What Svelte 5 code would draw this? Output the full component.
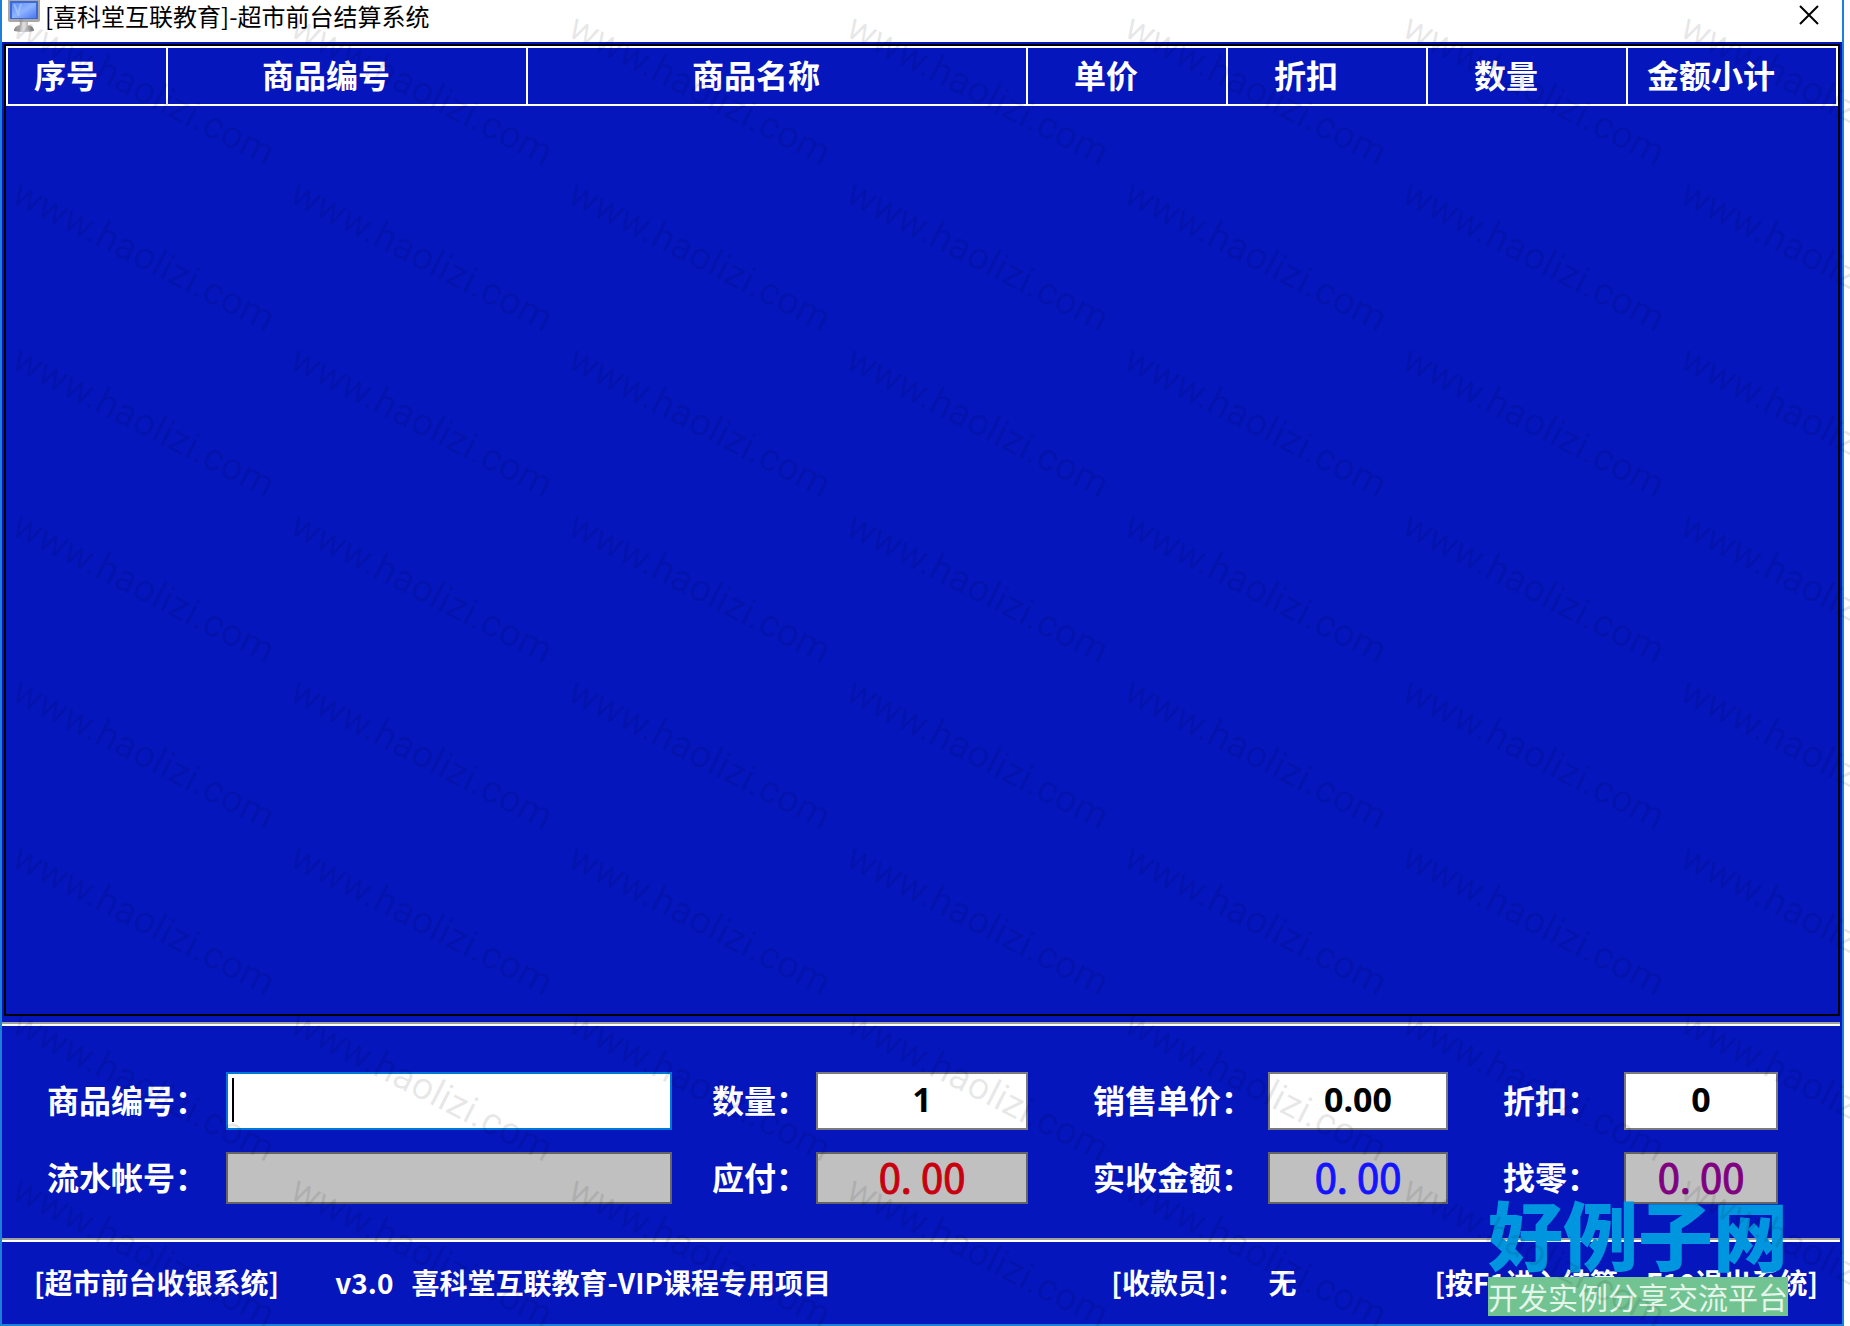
<script>
	// Sales table columns, width is a share of the whole table
	const columns = [
		{ label: "序号", width: 162 },
		{ label: "商品编号", width: 360 },
		{ label: "商品名称", width: 500 },
		{ label: "单价", width: 200 },
		{ label: "折扣", width: 200 },
		{ label: "数量", width: 200 },
		{ label: "金额小计", width: 210 },
	];

	const totalWidth = columns.reduce((sum, col) => sum + col.width, 0);

	// Watermark tiles, 7 per row
	const tiles = Array(56).fill("www.haolizi.com");

	let productId = "";
	let quantity = "1";
	let unitPrice = "0.00";
	let discount = "0";
</script>

<div class="window">
	<header class="title-bar">
		<svg class="app-icon" width="32" height="32" viewBox="0 0 32 32">
			<defs>
				<linearGradient id="screen" x1="0" y1="0" x2="1" y2="1">
					<stop offset="0" stop-color="#5d8df0" />
					<stop offset="0.5" stop-color="#8fb4ff" />
					<stop offset="1" stop-color="#4a78f0" />
				</linearGradient>
				<linearGradient id="metal" x1="0" y1="0" x2="1" y2="0">
					<stop offset="0" stop-color="#7e7e7e" />
					<stop offset="0.5" stop-color="#e2e2e2" />
					<stop offset="1" stop-color="#757575" />
				</linearGradient>
			</defs>
			<rect x="0" y="-2" width="32" height="24" rx="2" fill="#aaa8a2" />
			<rect x="2" y="1" width="28" height="18" fill="#3c68dc" />
			<rect x="4" y="3" width="24" height="15" fill="url(#screen)" />
			<path d="M6 4l5 12M13 4l-3 10" stroke="#b4cdff" stroke-width="2" fill="none" opacity="0.6" />
			<path d="M12 22h8v3q6 1 6 6q-10 2-20 0q0-5 6-6z" fill="url(#metal)" />
		</svg>
		<h1>[喜科堂互联教育]-超市前台结算系统</h1>
		<button class="close" aria-label="关闭">
			<svg width="20" height="20" viewBox="0 0 20 20">
				<path d="M1 1l18 18M19 1L1 19" stroke="#000" stroke-width="2" />
			</svg>
		</button>
	</header>

	<main class="sales">
		<table>
			<colgroup>
				{#each columns as col}
					<col style={`width: ${(col.width / totalWidth) * 100}%`} />
				{/each}
			</colgroup>
			<thead>
				<tr>
					{#each columns as col}
						<th>{col.label}</th>
					{/each}
				</tr>
			</thead>
			<tbody></tbody>
		</table>
	</main>

	<form class="entry">
		<label for="product">商品编号：</label>
		<div class="field">
			<input id="product" class="active" type="text" bind:value={productId} />
			<span class="caret"></span>
		</div>
		<label for="quantity">数量：</label>
		<input id="quantity" type="text" bind:value={quantity} />
		<label for="price">销售单价：</label>
		<input id="price" type="text" bind:value={unitPrice} />
		<label for="discount">折扣：</label>
		<input id="discount" type="text" bind:value={discount} />

		<label for="serial">流水帐号：</label>
		<input id="serial" type="text" readonly />
		<label for="due">应付：</label>
		<input id="due" class="due" type="text" readonly value="0. 00" />
		<label for="paid">实收金额：</label>
		<input id="paid" class="paid" type="text" readonly value="0. 00" />
		<label for="change">找零：</label>
		<input id="change" class="change" type="text" readonly value="0. 00" />
	</form>

	<footer class="status">
		<span class="system">[超市前台收银系统]</span>
		<span class="version">v3.0</span>
		<span class="project">喜科堂互联教育-VIP课程专用项目</span>
		<span class="cashier">[收款员]：</span>
		<span class="name">无</span>
		<span class="keys">[按F1进入结算，F10退出系统]</span>
	</footer>
</div>

<div class="site-logo">
	<strong>好例子网</strong>
	<span>开发实例分享交流平台</span>
</div>

<div class="watermark" aria-hidden="true">
	{#each tiles as tile}
		<div class="tile"><span>{tile}</span></div>
	{/each}
</div>

<style>
	:global(body) {
		background-color: #fff;
	}

	:global(#app) {
		position: relative;
		overflow: hidden;
	}

	.window {
		display: flex;
		flex-direction: column;
		min-height: 100vh;
		box-sizing: border-box;
		margin-right: 6px;
		border: 2px solid #1a80d9;
		border-top: 0;
		background-color: #0516bd;
		color: #fff;
		font-family: "Noto Sans CJK SC", sans-serif;
	}

	.title-bar {
		display: flex;
		align-items: flex-start;
		height: 42px;
		padding: 0 23px 0 6px;
		background-color: #fff;
		color: #000;
	}

	.app-icon {
		flex: none;
	}

	h1 {
		flex: 1;
		margin: 0 0 0 5px;
		font-size: 24px;
		font-weight: 400;
		line-height: 32px;
	}

	.close {
		display: flex;
		margin-top: 5px;
		padding: 0;
		border: 0;
		background: none;
	}

	.sales {
		flex: 1;
		margin: 2px 2px 6px;
		border: 2px solid #000;
	}

	table {
		width: 100%;
		table-layout: fixed;
		border-spacing: 0;
	}

	th {
		box-sizing: border-box;
		height: 60px;
		padding: 0 42px 4px 0;
		border: 2px solid #fff;
		border-left: 0;
		font-size: 32px;
		line-height: 40px;
		font-weight: 700;
		white-space: nowrap;
	}

	th:first-child {
		border-left: 2px solid #fff;
	}

	.entry {
		display: grid;
		grid-template-columns: 224px 446fr 144px 212fr 240px 180fr 176px 154fr;
		grid-template-rows: 58px 52px;
		row-gap: 22px;
		align-items: center;
		margin-right: 2px;
		padding: 48px 62px 34px 0;
		border-top: 2px solid #a0a0a0;
		box-shadow: inset 0 2px #fff;
	}

	label {
		padding-bottom: 4px;
		font-size: 32px;
		line-height: 40px;
		font-weight: 700;
		white-space: nowrap;
	}

	label:nth-of-type(4n + 1) {
		padding-left: 45px;
	}

	label:nth-of-type(4n + 2) {
		padding-left: 40px;
	}

	label:nth-of-type(4n + 3) {
		padding-left: 65px;
	}

	label:nth-of-type(4n) {
		padding-left: 55px;
	}

	.field {
		position: relative;
		height: 100%;
	}

	input {
		box-sizing: border-box;
		width: 100%;
		height: 100%;
		padding: 0 4px 4px;
		border: 2px solid #7a7a7a;
		background-color: #fff;
		color: #000;
		font-family: "Noto Sans", sans-serif;
		font-size: 34px;
		font-weight: 700;
		text-align: center;
		outline: none;
	}

	input.active {
		border-color: #0078d7;
		text-align: left;
	}

	input[readonly] {
		border-color: #646464;
		background-color: #c0c0c0;
		font-family: "Noto Sans CJK SC", sans-serif;
		font-size: 40px;
		font-weight: 400;
		-webkit-text-stroke: 1px currentColor;
	}

	input.due {
		color: #c80010;
	}

	input.paid {
		color: #1414ff;
	}

	input.change {
		color: #800080;
	}

	.caret {
		position: absolute;
		top: 6px;
		left: 6px;
		width: 2px;
		height: 44px;
		background-color: #000;
	}

	.status {
		display: flex;
		align-items: center;
		height: 84px;
		margin-right: 2px;
		padding: 0 22px 0 32px;
		border-top: 2px solid #a0a0a0;
		box-shadow: inset 0 2px #fff;
		font-size: 28px;
		font-weight: 700;
		white-space: nowrap;
	}

	.version {
		margin-left: 56px;
	}

	.project {
		margin-left: 18px;
	}

	.cashier {
		margin-left: auto;
	}

	.name {
		margin-left: 24px;
	}

	.keys {
		margin-left: 138px;
	}

	.site-logo {
		position: absolute;
		right: 62px;
		bottom: 10px;
		display: flex;
		flex-direction: column;
		font-family: "Noto Sans CJK SC", sans-serif;
	}

	.site-logo strong {
		color: #0096df;
		font-size: 75px;
		line-height: 88px;
		font-weight: 900;
	}

	.site-logo span {
		background-color: #72c392;
		color: #e4f5ea;
		font-size: 30px;
		line-height: 39px;
		text-align: center;
	}

	.watermark {
		position: absolute;
		top: 0;
		left: 0;
		right: 0;
		bottom: 0;
		display: grid;
		grid-template-columns: repeat(7, 278px);
		grid-auto-rows: 166px;
		overflow: hidden;
		pointer-events: none;
		color: rgba(0, 0, 0, 0.09);
		font-family: Roboto, sans-serif;
		font-size: 38px;
		font-weight: 400;
		line-height: 36px;
	}

	.tile span {
		display: block;
		margin: 8px 0 0 24px;
		transform: rotate(27deg);
		transform-origin: 0 0;
	}
</style>
